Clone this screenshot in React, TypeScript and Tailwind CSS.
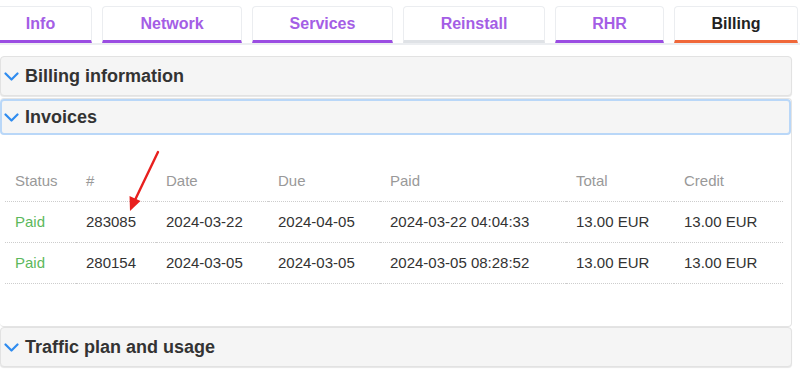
import type { ReactNode } from "react";

const tabs = [
  { label: "Info", w: "w-[103px]", line: "border-b-[#9b4de2]" },
  { label: "Network", w: "w-[140px]", line: "border-b-[#9b4de2]" },
  { label: "Services", w: "w-[141px]", line: "border-b-[#9b4de2]" },
  { label: "Reinstall", w: "w-[142px]", line: "border-b-[#dfe2e6]" },
  { label: "RHR", w: "w-[109px]", line: "border-b-[#9b4de2]" },
  { label: "Billing", w: "w-[124px]", line: "border-b-[#f0683a]", active: true },
];

const invoices = [
  { id: "283085", date: "2024-03-22", due: "2024-04-05", paid: "2024-03-22 04:04:33", total: "13.00 EUR", credit: "13.00 EUR" },
  { id: "280154", date: "2024-03-05", due: "2024-03-05", paid: "2024-03-05 08:28:52", total: "13.00 EUR", credit: "13.00 EUR" },
];

function Chevron() {
  return (
    <svg width="15" height="9" viewBox="0 0 15 9" className="shrink-0">
      <path d="M1.5 1.5 L7.5 7.5 L13.5 1.5" fill="none" stroke="#2f8cf0" strokeWidth="2.2" strokeLinecap="round" strokeLinejoin="round" />
    </svg>
  );
}

function Header({ children, focused }: { children: ReactNode; focused?: boolean }) {
  return (
    <div
      className={
        focused
          ? "flex h-[36px] items-center gap-[6px] rounded-[4px] border-2 border-[#b9d7f8] bg-[#f5f5f5] pl-[2px]"
          : "flex h-[40px] items-center gap-[6px] rounded-[4px] border border-[#e2e2e2] bg-[#f5f5f5] pl-[3px] shadow-[0_1px_1px_rgba(0,0,0,0.1)]"
      }
    >
      <Chevron />
      <span className="text-[18px] font-bold text-[#333]">{children}</span>
    </div>
  );
}

export default function App() {
  const th = "h-[40px] border-b border-dotted border-[#cdcdcd] pl-[10px] text-left align-middle font-normal text-[#999]";
  const td = "h-[41px] border-b border-dotted border-[#cdcdcd] pl-[10px] align-middle text-[#333]";

  return (
    <div className="relative h-[378px] w-[800px] overflow-hidden bg-white font-['Liberation_Sans',Arial,sans-serif]">
      {/* tab strip */}
      <div className="-ml-[11px] flex items-end gap-[10px] border-b-2 border-[#eceef1] pt-[6px]">
        {tabs.map((t) => (
          <div
            key={t.label}
            className={`${t.w} flex h-[37px] shrink-0 items-center justify-center rounded-t-[4px] border border-b-[3px] border-[#ebedf0] bg-white text-[16px] font-bold ${t.active ? "text-[#222]" : "text-[#a45ee5]"} ${t.line}`}
          >
            <span className="-mb-px">{t.label}</span>
          </div>
        ))}
      </div>

      <div className="mr-[8px] mt-[11px] flex flex-col">
        <Header>Billing information</Header>

        <div className="mt-[2px] rounded-[4px] border border-l-0 border-[#e4e4e4]">
          <Header focused>Invoices</Header>
          <div className="pb-[42px] pl-[5px] pr-[8px] pt-[27px]">
            <table className="w-full border-separate border-spacing-0 text-[15px]">
              <thead>
                <tr>
                  <th className={`${th} w-[71px]`}>Status</th>
                  <th className={`${th} w-[80px]`}>#</th>
                  <th className={`${th} w-[112px]`}>Date</th>
                  <th className={`${th} w-[112px]`}>Due</th>
                  <th className={`${th} w-[186px]`}>Paid</th>
                  <th className={`${th} w-[108px]`}>Total</th>
                  <th className={th}>Credit</th>
                </tr>
              </thead>
              <tbody>
                {invoices.map((inv) => (
                  <tr key={inv.id}>
                    <td className={`${td} !text-[#5cb85c]`}>Paid</td>
                    <td className={td}>{inv.id}</td>
                    <td className={td}>{inv.date}</td>
                    <td className={td}>{inv.due}</td>
                    <td className={td}>{inv.paid}</td>
                    <td className={td}>{inv.total}</td>
                    <td className={td}>{inv.credit}</td>
                  </tr>
                ))}
              </tbody>
            </table>
          </div>
        </div>

        <Header>Traffic plan and usage</Header>
      </div>

      {/* annotation arrow */}
      <svg className="pointer-events-none absolute left-0 top-0" width="800" height="378">
        <line x1="158" y1="152" x2="135" y2="200" stroke="#e8201e" strokeWidth="2.4" strokeLinecap="round" />
        <polygon points="130,211 129.5,196 140.5,201" fill="#e8201e" />
      </svg>
    </div>
  );
}
